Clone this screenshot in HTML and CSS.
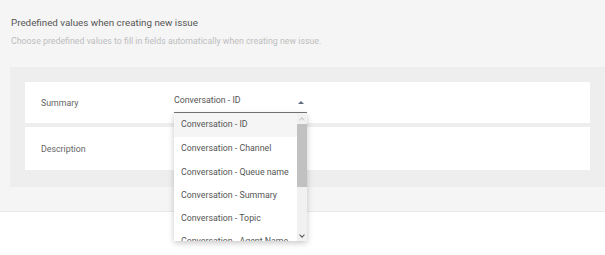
FILE: index.html
```html
<!DOCTYPE html>
<html lang="en">
<head>
  <meta charset="UTF-8" />
  <title>Predefined values</title>
  <link rel="stylesheet" href="styles.css">
</head>
<body>
  <div class="section">
    <h2 class="section-title">Predefined values when creating new issue</h2>
    <p class="section-desc">Choose predefined values to fill in fields automatically when creating new issue.</p>

    <div class="panel">
      <!-- Summary row -->
      <div class="row">
        <div class="row-label">Summary</div>
        <div class="select">
          <div class="select-value">
            <span>Conversation - ID</span>
            <span class="select-arrow"></span>
          </div>

          <!-- open dropdown -->
          <div class="dropdown">
            <ul class="options">
              <li class="option selected">Conversation - ID</li>
              <li class="option">Conversation - Channel</li>
              <li class="option">Conversation - Queue name</li>
              <li class="option">Conversation - Summary</li>
              <li class="option">Conversation - Topic</li>
              <li class="option">Conversation - Agent Name</li>
            </ul>
            <div class="scrollbar">
              <span class="scroll-btn up"></span>
              <div class="scroll-track"><div class="scroll-thumb"></div></div>
              <span class="scroll-btn down"></span>
            </div>
          </div>
        </div>
      </div>

      <!-- Description row -->
      <div class="row">
        <div class="row-label">Description</div>
      </div>
    </div>
  </div>
</body>
</html>
```

FILE: styles.css
```css
html,
body {
  min-height: 100%;
}

body {
  margin: 0;
  min-height: 100vh;
  font-family: Roboto, "Liberation Sans", sans-serif;
  background-color: #fff;
}

/* Section */
.section {
  background-color: #f5f5f5;
  border-bottom: 1px solid #e8e8e8;
  padding: 15px 0 24px;
}

.section-title {
  margin: 0 0 0 11px;
  font-size: 9.8px;
  font-weight: 400;
  color: #555;
  line-height: 15px;
}

.section-desc {
  margin: 5px 0 0 11px;
  font-size: 8.8px;
  color: #bdbdbd;
  line-height: 12px;
}

/* Grey panel */
.panel {
  margin: 20px 0 0 10px;
  background-color: #eee;
  padding: 15px 15px 17px;
}

.row {
  display: flex;
  align-items: center;
  background-color: #fff;
  height: 41px;
  margin-bottom: 4px;
}

.row:last-child {
  height: 43px;
  margin-bottom: 0;
}

.row-label {
  width: 149px;
  padding-left: 16px;
  box-sizing: border-box;
  font-size: 8.8px;
  color: #666;
}

/* Select */
.select {
  position: relative;
  width: 133px;
  align-self: flex-start;
  margin-top: 8px;
}

.select-value {
  display: flex;
  justify-content: space-between;
  height: 22px;
  line-height: 20px;
  font-size: 8.8px;
  color: #555;
  border-bottom: 1px solid #777;
}

.select-arrow {
  width: 0;
  height: 0;
  border-left: 3px solid transparent;
  border-right: 3px solid transparent;
  border-bottom: 3px solid #5f6b78;
  margin-right: 3px;
  margin-top: 11px;
}

/* Dropdown */
.dropdown {
  position: absolute;
  top: 23px;
  left: 0;
  width: 133px;
  height: 128px;
  background-color: #fff;
  box-shadow: 0 2px 6px rgb(0 0 0 / 0.22);
  display: flex;
  overflow: hidden;
  z-index: 2;
}

.options {
  flex: 1;
  list-style: none;
  margin: 0;
  padding: 0;
  overflow: hidden;
}

.option {
  height: 23.3px;
  line-height: 23.3px;
  padding-left: 7px;
  font-size: 8.8px;
  color: #555;
  white-space: nowrap;
}

.option.selected {
  height: 24.3px;
  background-color: #f5f5f5;
}

.scrollbar {
  width: 10px;
  display: flex;
  flex-direction: column;
  background-color: #f1f1f1;
}

.scroll-btn {
  height: 11px;
  display: flex;
  align-items: center;
  justify-content: center;
}

.scroll-btn::before {
  content: "";
  width: 3px;
  height: 3px;
  border-left: 1px solid #888;
  border-top: 1px solid #888;
}

.scroll-btn.up::before {
  transform: rotate(45deg);
  margin-top: 2px;
  border-color: #c8c8c8;
}

.scroll-btn.down::before {
  transform: rotate(225deg);
  margin-top: -2px;
  border-color: #555;
}

.scroll-track {
  flex: 1;
}

.scroll-thumb {
  height: 63px;
  background-color: #c1c1c1;
}
```
